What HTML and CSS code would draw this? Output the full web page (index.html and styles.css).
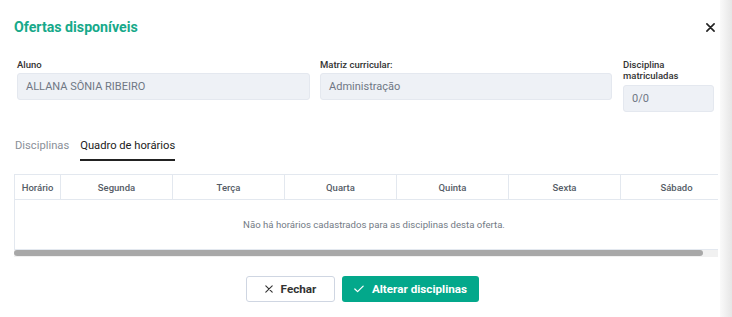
FILE: index.html
```html
<!DOCTYPE html>
<html lang="pt-BR">
<head>
    <meta charset="UTF-8">
    <title>Ofertas disponíveis</title>
    <link rel="stylesheet" href="styles.css">
</head>
<body>

    <!-- modal -->
    <div class="modal">
        <div class="modal-header">
            <h2 class="modal-title">Ofertas disponíveis</h2>
            <button class="close-btn" aria-label="Fechar">
                <svg width="9" height="9" viewBox="0 0 10 10"><path d="M1 1 L9 9 M9 1 L1 9" stroke="#222" stroke-width="1.8" stroke-linecap="round"/></svg>
            </button>
        </div>

        <div class="form-row">
            <div class="field field-aluno">
                <label>Aluno</label>
                <div class="input">ALLANA SÔNIA RIBEIRO</div>
            </div>
            <div class="field field-matriz">
                <label>Matriz curricular:</label>
                <div class="input">Administração</div>
            </div>
            <div class="field field-count">
                <label>Disciplina<br>matriculadas</label>
                <div class="input">0/0</div>
            </div>
        </div>

        <!-- abas -->
        <div class="tabs">
            <span class="tab">Disciplinas</span>
            <span class="tab active">Quadro de horários</span>
        </div>

        <div class="table-wrap">
            <table class="schedule">
                <thead>
                    <tr>
                        <th class="col-hour">Horário</th>
                        <th>Segunda</th>
                        <th>Terça</th>
                        <th>Quarta</th>
                        <th>Quinta</th>
                        <th>Sexta</th>
                        <th>Sábado</th>
                    </tr>
                </thead>
                <tbody>
                    <tr>
                        <td colspan="7" class="empty"><span class="empty-msg">Não há horários cadastrados para as disciplinas desta oferta.</span></td>
                    </tr>
                </tbody>
            </table>
        </div>
        <div class="hscroll"><div class="hscroll-thumb"></div></div>

        <div class="modal-footer">
            <button class="btn btn-outline">
                <svg width="8" height="8" viewBox="0 0 10 10"><path d="M1 1 L9 9 M9 1 L1 9" stroke="#333" stroke-width="1.4" stroke-linecap="round"/></svg>
                Fechar
            </button>
            <button class="btn btn-primary">
                <svg width="10" height="8" viewBox="0 0 12 9"><path d="M1 4.5 L4.3 7.6 L11 1" fill="none" stroke="#fff" stroke-width="1.5" stroke-linecap="round" stroke-linejoin="round"/></svg>
                Alterar disciplinas
            </button>
        </div>
    </div>
    <div class="backdrop-edge"></div>

</body>
</html>
```

FILE: styles.css
```css
body {
    margin: 0;
    font-family: Roboto, "Liberation Sans", Arial, sans-serif;
    background-color: #fff;
    display: flex;
    height: 317px;
    overflow: hidden;
}

/* モーダル */
.modal {
    width: 720px;
    flex-shrink: 0;
    background-color: #fff;
    padding: 0 0 0 14px;
    box-sizing: border-box;
}

.backdrop-edge {
    flex-grow: 1;
    background: linear-gradient(to right, #fafafa, #e6e6e6);
}

.modal-header {
    display: flex;
    justify-content: space-between;
    align-items: center;
    padding-top: 16px;
    padding-right: 4px;
    height: 22px;
}

.modal-title {
    margin: 0;
    font-size: 14.2px;
    font-weight: 700;
    color: #17a98a;
}

.close-btn {
    background: none;
    border: none;
    padding: 0;
    width: 12px;
    height: 12px;
    display: flex;
    align-items: center;
    justify-content: center;
    cursor: pointer;
}

/* フォーム */
.form-row {
    display: flex;
    align-items: flex-start;
    gap: 10px;
    margin-top: 21px;
    padding-left: 3px;
}

.field label {
    display: block;
    font-size: 9.5px;
    font-weight: 500;
    line-height: 11px;
    color: #333;
    margin-bottom: 3px;
}

.field-aluno { width: 293px; }
.field-matriz { width: 292px; margin-right: 1px; }
.field-count { width: 91px; }
.field-count label { margin-bottom: 4px; }

.input {
    height: 27px;
    box-sizing: border-box;
    background-color: #eef1f6;
    border: 1px solid #e4e8ef;
    border-radius: 3px;
    padding: 0 8px;
    display: flex;
    align-items: center;
    font-size: 11px;
    color: #6f7784;
}

/* タブ */
.tabs {
    display: flex;
    gap: 11px;
    margin-top: 27px;
    padding-left: 1px;
    font-size: 11.2px;
    line-height: 13px;
}

.tab {
    color: #8a8f98;
    padding-bottom: 7px;
}

.tab.active {
    color: #222;
    border-bottom: 2px solid #222;
    padding: 0 0 7px 0;
}

/* テーブル */
.table-wrap {
    margin-top: 13px;
    overflow: hidden;
    width: 704px;
}

.schedule {
    width: 718px;
    border-collapse: collapse;
    table-layout: fixed;
}

.schedule th {
    height: 25px;
    box-sizing: border-box;
    border: 1px solid #e3e8ef;
    font-size: 9.5px;
    font-weight: 500;
    color: #555c66;
    padding: 0;
    width: 112px;
}

.schedule th.col-hour {
    width: 46px;
}

.schedule td.empty {
    height: 49px;
    border: 1px solid #e3e8ef;
    border-top: none;
    padding: 0;
}

.empty-msg {
    display: block;
    width: 704px;
    padding-left: 14px;
    box-sizing: border-box;
    text-align: center;
    font-size: 9.6px;
    color: #727a85;
}

/* スクロールバー */
.hscroll {
    width: 704px;
    height: 7px;
    background-color: #f1f1f1;
}

.hscroll-thumb {
    width: 689px;
    height: 6px;
    background-color: #a8a8a8;
    border-radius: 4px;
}

/* フッター */
.modal-footer {
    display: flex;
    justify-content: center;
    gap: 7px;
    margin-top: 19px;
    padding-right: 9px;
}

.btn {
    height: 26px;
    border-radius: 3px;
    font-family: inherit;
    font-size: 11.7px;
    font-weight: 700;
    display: flex;
    align-items: center;
    justify-content: center;
    gap: 8px;
    cursor: pointer;
}

.btn-outline {
    width: 89px;
    background-color: #fff;
    border: 1px solid #cfd6e2;
    color: #333;
}

.btn-primary {
    width: 137px;
    background-color: #03a88b;
    border: none;
    color: #fff;
}
```
